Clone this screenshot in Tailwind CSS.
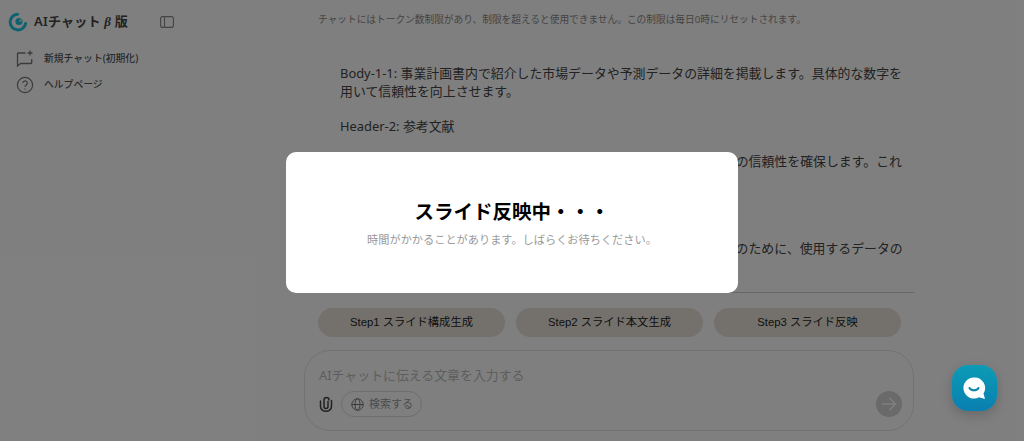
<!DOCTYPE html>
<html lang="ja">
<head>
<meta charset="utf-8">
<title>AIチャット</title>
<script src="https://cdn.jsdelivr.net/npm/@tailwindcss/browser@4"></script>
</head>
<body class="bg-white overflow-hidden font-['Noto_Sans','Noto_Sans_CJK_JP',sans-serif]">
<div class="relative flex w-[1024px] h-[441px] overflow-hidden">
    <!-- Sidebar -->
    <aside class="w-[304px] shrink-0 pl-[8px] pt-[12px]">
        <div class="flex items-center h-[20px]">
            <svg class="w-[20px] h-[20px]" viewBox="0 0 20 20" fill="none">
                <path d="M9.500 2.300A7.800 7.800 0 1 0 17.600 11.500" stroke="#1cc4e0" stroke-width="3" stroke-linecap="round"/>
                <circle cx="11" cy="9.500" r="3.600" fill="#1cc4e0"/>
                <circle cx="12.500" cy="8.400" r="1.500" fill="#9fe4ee"/>
            </svg>
            <span class="ml-[6px] text-[13px] font-semibold text-[#444] tracking-[0.2px] whitespace-nowrap">AIチャット <i class="font-['Liberation_Serif',serif]">β</i> 版</span>
            <svg class="ml-[32px] w-[14px] h-[12px]" viewBox="0 0 14 12" fill="none" stroke="#888" stroke-width="1.100">
                <rect x="0.600" y="0.600" width="12.800" height="10.800" rx="2"/>
                <path d="M4.500 1v10"/>
            </svg>
        </div>
        <nav class="mt-[17px] pl-[8px] flex flex-col gap-[6px]">
            <div class="flex items-center h-[20px]">
                <svg class="w-[18px] h-[18px]" viewBox="0 0 18 18" fill="none" stroke="#777" stroke-width="1.300">
                    <path d="M9.500 3H2.200a.7.7 0 0 0-.7.7v12.300l3-2.500h10.500a.7.7 0 0 0 .7-.7V9"/>
                    <path d="M14 0.500v5M11.500 3h5"/>
                </svg>
                <span class="ml-[10px] text-[9.800px] font-medium text-[#555] whitespace-nowrap">新規チャット(初期化)</span>
            </div>
            <div class="flex items-center h-[20px]">
                <svg class="w-[18px] h-[18px]" viewBox="0 0 18 18" fill="none" stroke="#777" stroke-width="1.200">
                    <circle cx="9" cy="9" r="7.600"/>
                    <path d="M6.900 7a2.200 2.200 0 1 1 3.300 2c-.8.500-1.200.900-1.200 1.800"/>
                    <path d="M9 12.600v.9"/>
                </svg>
                <span class="ml-[10px] text-[9.800px] font-medium text-[#555] whitespace-nowrap">ヘルプページ</span>
            </div>
        </nav>
    </aside>

    <!-- Main -->
    <main class="w-[610px] shrink-0 flex flex-col">
        <p class="pt-[13px] pl-[14px] text-[9.700px] leading-[13px] text-[#888] whitespace-nowrap">チャットにはトークン数制限があり、制限を超えると使用できません。この制限は毎日0時にリセットされます。</p>
        <div class="mt-[39px] pl-[36px] w-[610px] h-[227px] overflow-hidden text-[12.900px] leading-[17.500px] text-[#444] whitespace-nowrap">
            <p>Body-1-1: 事業計画書内で紹介した市場データや予測データの詳細を掲載します。具体的な数字を<br>用いて信頼性を向上させます。</p>
            <p class="mt-[17.500px]">Header-2: 参考文献</p>
            <p class="mt-[17.500px]">Body-2-1: 本資料で使用したデータや調査結果の出典を明記し、情報の信頼性を確保します。これ<br>により読み手の理解を深めます。</p>
            <p class="mt-[17.500px]">Body-2-2: 参考文献を整理します。</p>
            <p class="mt-[17.500px]">Body-2-3: 読み手が内容を自ら確認しやすくすることや透明性の確保のために、使用するデータの</p>
        </div>
        <div class="border-t border-[#ccc] flex gap-[11px] pl-[14px] pt-[15px]">
            <button class="w-[187px] h-[29px] rounded-full bg-[#e9e2d8] text-[11.300px] text-[#222] font-['Liberation_Sans','Noto_Sans_CJK_JP',sans-serif]">Step1 スライド構成生成</button>
            <button class="w-[187px] h-[29px] rounded-full bg-[#e9e2d8] text-[11.300px] text-[#222] font-['Liberation_Sans','Noto_Sans_CJK_JP',sans-serif]">Step2 スライド本文生成</button>
            <button class="w-[187px] h-[29px] rounded-full bg-[#e9e2d8] text-[11.300px] text-[#222] font-['Liberation_Sans','Noto_Sans_CJK_JP',sans-serif]">Step3 スライド反映</button>
        </div>
        <div class="mt-[13px] h-[81px] rounded-[26px] border border-[#e5e5e5] pl-[14px] pr-[11px] pt-[14px] flex flex-col">
            <p class="text-[12.900px] leading-[20px] text-[#bbb]">AIチャットに伝える文章を入力する</p>
            <div class="mt-[6px] flex items-center justify-between">
                <div class="flex items-center">
                    <svg class="w-[14px] h-[16px]" viewBox="0 0 14 16" fill="none" stroke="#444" stroke-width="1.500" stroke-linecap="round">
                        <path d="M9 5.500v5a2 2 0 0 1-4 0V4a2.500 2.500 0 0 1 5 0"/>
                        <path d="M1.500 5v5.500a5.500 4.800 0 0 0 11 0V4.500"/>
                    </svg>
                    <div class="ml-[8px] flex items-center h-[26px] w-[81px] rounded-full border border-[#ddd] pl-[9px]">
                        <svg class="w-[13px] h-[13px]" viewBox="0 0 13 13" fill="none" stroke="#777" stroke-width="1">
                            <circle cx="6.500" cy="6.500" r="5.700"/>
                            <ellipse cx="6.500" cy="6.500" rx="2.500" ry="5.700"/>
                            <path d="M0.800 6.500h11.400"/>
                        </svg>
                        <span class="ml-[5px] text-[11px] text-[#999] whitespace-nowrap">検索する</span>
                    </div>
                </div>
                <div class="w-[26px] h-[26px] rounded-full bg-[#d4d4d4] flex items-center justify-center">
                    <svg class="w-[18px] h-[18px]" viewBox="0 0 18 18" fill="none" stroke="#fff" stroke-width="1.500">
                        <path d="M2 9h13.500M9.500 3l6 6-6 6"/>
                    </svg>
                </div>
            </div>
        </div>
    </main>

    <!-- Dim layer and dialog -->
    <div class="absolute inset-0 z-10 bg-black/50 flex items-start justify-center pt-[152px]">
        <div class="w-[452px] h-[141px] bg-white rounded-[10px] flex flex-col items-center pt-[47px]">
            <h2 class="text-[19.500px] leading-[26px] font-bold text-black whitespace-nowrap">スライド反映中・・・</h2>
            <p class="mt-[7px] text-[11.200px] leading-[16px] text-[#999] whitespace-nowrap">時間がかかることがあります。しばらくお待ちください。</p>
        </div>
    </div>

    <!-- Chat launcher, stays above the dim layer -->
    <div class="absolute z-20 left-[952px] top-[365px] w-[45px] h-[46px] rounded-[16px] bg-gradient-to-b from-[#0d9bb5] to-[#0a7fb0] shadow-[0_4px_12px_rgba(0,0,0,0.18)] flex items-center justify-center">
        <svg class="w-[23px] h-[23px]" viewBox="0 0 23 23">
            <path d="M11 0.500a10.500 10.500 0 1 0 5 19.700L22 22l-1.500-5.500A10.500 10.500 0 0 0 11 0.500z" fill="#fff"/>
            <path d="M6.500 11c1.500 3 7.500 3 9 0" fill="none" stroke="#0a86ad" stroke-width="2" stroke-linecap="round"/>
        </svg>
    </div>
</div>
</body>
</html>
